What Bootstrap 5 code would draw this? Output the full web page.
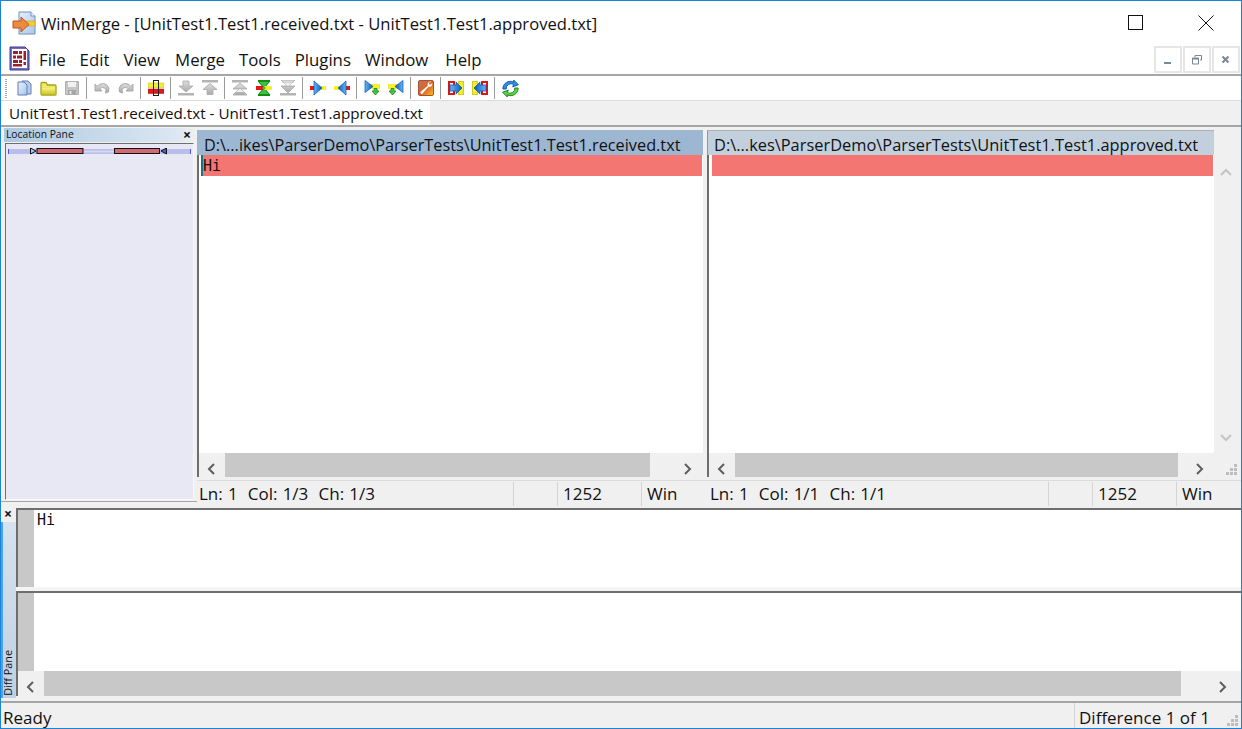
<!DOCTYPE html>
<html lang="en">
<head>
<meta charset="utf-8">
<title>WinMerge</title>
<link href="https://cdn.jsdelivr.net/npm/bootstrap@5.3.0/dist/css/bootstrap.min.css" rel="stylesheet">
<style>
html,body{margin:0;height:100%;overflow:hidden;background:#f0f0f0}
body{font-family:"Open Sans","Noto Sans",sans-serif;color:#111;line-height:1}
.wm-win{width:1242px;height:729px;border:1px solid #1883d7;background:#f0f0f0;overflow:hidden}
.wm-title{height:44px;background:#fff;flex:none;position:relative}
.wm-title-ico{margin-left:11px;margin-top:10px;flex:none}
.wm-title-txt{font-size:16.6px;margin-left:4px;margin-top:15px;white-space:nowrap}
.wm-caps{margin-left:auto;padding-right:27px;padding-top:14px;gap:54px}
.wm-menu{height:31px;background:#fff;border-bottom:2px solid #a6a6a6;flex:none}
.wm-menu-ico{margin-left:8px;margin-top:1px;flex:none}
.wm-menu-items{margin-left:9px;font-size:16.8px;margin-top:7px;gap:14px;white-space:nowrap}
.wm-merge{margin-left:1px}
.wm-help{margin-left:3px}
.wm-mdi{margin-left:auto;gap:1px;padding-right:1px;padding-top:1px}
.wm-mdi-b{width:28px;height:27px;border:2px solid #e6e6e6;background:#fff}
.wm-tools{height:25px;background:#fff;border-bottom:1px solid #dcdcdc;flex:none;padding-left:11px;position:relative}
.wm-grip{position:absolute;left:4px;top:3px;width:2px;height:19px;background:repeating-linear-gradient(#a9a9a9 0 1px,#fff 1px 2px)}
.wm-tb{width:24px;height:24px;flex:none}
.wm-sep{width:6px;height:24px;flex:none;position:relative}
.wm-sep::after{content:"";position:absolute;left:2px;top:1px;bottom:1px;width:1px;background:#9a9a9a}
.wm-tabs{height:26px;border-bottom:2px solid #a6a6a6;flex:none}
.wm-tab{width:429px;background:#fff;font-size:15.2px;padding-left:8px;padding-top:5px;white-space:nowrap;height:24px}
.wm-main{height:381px;flex:none}
.wm-left{width:196px;flex:none;height:375px;border-bottom:1px solid #a6a6a6;padding:1px 0 0 3px}
.wm-loc-h{height:14px;margin-bottom:1px;margin-right:1px;background:linear-gradient(90deg,#adc9e2,#dbe7f2 90%,#f0f0f0);font-size:10.3px;padding:1px 0 0 2px;position:relative;white-space:nowrap}
.wm-x{position:absolute;font-size:14px;font-weight:700;color:#111}
.wm-loc-x{right:5px;top:0}
.wm-loc{height:357px;width:189px;margin-left:1px;background:#e7e8f3;border-top:1px solid #6e6e6e;border-left:1px solid #6e6e6e;border-right:1px solid #f8f8f8;border-bottom:1px solid #f8f8f8;padding-top:4px;padding-left:2px}
.wm-right{width:1044px;flex:none;padding-top:3px}
.wm-panes{height:350px;flex:none}
.wm-pl{width:510px;flex:none}
.wm-pr{width:533px;flex:none}
.wm-head{height:25px;font-size:16.3px;padding:7px 0 0 7px;white-space:nowrap;flex:none}
.wm-head-a{background:#9db6d2;width:506px}
.wm-head-b{background:#c2d0de;width:507px;border-left:1px solid #8c98a4;border-top:1px solid #b0b0b0;padding-top:6px;padding-left:6px;font-size:16.4px}
.wm-body{height:298px;flex:none;background:#fff;border-left:2px solid #6e6e6e}
.wm-body-a{width:506px;margin-left:0;padding-left:3px}
.wm-body-b{width:507px;margin-left:0;padding-left:3px}
.wm-code{font-family:"DejaVu Sans Mono",monospace;font-size:15px}
.wm-diffline{height:21px;background:#f47672;padding:4px 0 0 1px;position:relative;margin-right:1px}
.wm-caret{position:absolute;left:-1px;top:0;bottom:0;width:2px;background:#14787c}
.wm-vs{width:25px;height:298px;flex:none;padding:11px 0 9px 6px}
.wm-hs{height:24px;margin-top:0;flex:none;border-left:2px solid #6e6e6e}
.wm-hs-btn{background:#f0f0f0;flex:none}
.wm-thumb{background:#c8c8c8;flex:none}
.wm-b26{width:26px;padding-left:7px;padding-top:6px}
.wm-r1{width:53px;padding-left:31px;padding-top:6px}
.wm-r2{width:60px;padding-left:15px;padding-top:6px}
.wm-t-a{width:425px}
.wm-t-b{width:443px}
.wm-corner{flex:1;position:relative}
.wm-szgrip{position:absolute;right:2px;bottom:1px;width:12px;height:12px}
.wm-stats{height:27px;border-top:1px solid #dcdcdc;font-size:17px;padding-top:1px;flex:none}
.wm-sl{width:510px}.wm-sr{width:533px}
.wm-st{height:24px;padding-top:3px;white-space:pre;word-spacing:.7px;border-left:1px solid #d4d4d4;padding-left:5px;flex:none}
.wm-st-1{border-left:0;padding-left:2px;width:316px}
.wm-st-1b{border-left:0;padding-left:3px;width:341px}
.wm-st-2{width:44px}.wm-st-3{width:84px}.wm-st-4{width:63px}
.wm-diff{height:190px;flex:none}
.wm-strip{width:15px;flex:none;position:relative;background:linear-gradient(#d7e4f0,#bfd1e3)}
.wm-strip::before{content:"";position:absolute;left:0;top:14px;bottom:0;width:2px;background:#4aa3ea}
.wm-strip-h{height:14px;background:#f0f0f0;position:relative;flex:none}
.wm-strip-x{left:3px;top:-1px}
.wm-dp{position:absolute;left:2px;bottom:2px;font-size:10.8px;writing-mode:vertical-rl;transform:rotate(180deg);white-space:nowrap}
.wm-ed{flex:1}
.wm-e1{height:79px;border-top:2px solid #6e6e6e;border-left:2px solid #6e6e6e;background:#fff;flex:none}
.wm-gut{width:16px;background:#c8c8c8;flex:none}
.wm-e1 .wm-code{padding:3px 0 0 3px}
.wm-gap{height:4px;flex:none;background:#f4f4f4}
.wm-e2{height:80px;border-top:2px solid #6e6e6e;border-left:2px solid #6e6e6e;background:#fff;flex:none}
.wm-hs2{height:25px;flex:none;border-left:2px solid #6e6e6e}
.wm-b27{width:26px;padding-left:7px;padding-top:6px}
.wm-t-c{width:1137px}
.wm-r3{width:57px;padding-left:35px;padding-top:6px}
.wm-status{height:27px;flex:none;border-top:2px solid #a6a6a6;margin-top:3px;font-size:17px;position:relative}
.wm-ready{padding:6px 0 0 2px;width:1073px;flex:none}
.wm-diffn{border-left:1px solid #d4d4d4;padding:6px 0 0 4px;height:25px;white-space:nowrap}
</style>
</head>
<body>
<svg width="0" height="0" class="d-block position-absolute">
<defs>
<linearGradient id="g-blue" x1="0" y1="0" x2="1" y2="1"><stop offset="0" stop-color="#e8f1fb"/><stop offset="1" stop-color="#a9c5ea"/></linearGradient>
<linearGradient id="g-yel" x1="0" y1="0" x2="0" y2="1"><stop offset="0" stop-color="#f6f37a"/><stop offset="1" stop-color="#cfc82c"/></linearGradient>
<linearGradient id="g-gray" x1="0" y1="0" x2="0" y2="1"><stop offset="0" stop-color="#dedede"/><stop offset="1" stop-color="#aaa"/></linearGradient>
<linearGradient id="g-wr" x1="0" y1="0" x2="1" y2="1"><stop offset="0" stop-color="#b8735e"/><stop offset=".55" stop-color="#e0632a"/><stop offset="1" stop-color="#f8c81c"/></linearGradient>
<linearGradient id="g-arrow" x1="0" y1="0" x2="1" y2="0"><stop offset="0" stop-color="#5dbbf5"/><stop offset="1" stop-color="#0d55c0"/></linearGradient>
<linearGradient id="g-arrowl" x1="1" y1="0" x2="0" y2="0"><stop offset="0" stop-color="#5dbbf5"/><stop offset="1" stop-color="#0d55c0"/></linearGradient>
<symbol id="i-down" viewBox="0 0 16 16"><path d="M5 1h6v5h4l-7 6-7-6h4z" fill="url(#g-gray)" stroke="#a8a8a8" stroke-width=".8"/><rect x="0" y="13" width="16" height="2.5" fill="#b4b4b4"/></symbol>
<symbol id="i-up" viewBox="0 0 16 16"><rect x="0" y="0" width="16" height="2.5" fill="#b4b4b4"/><path d="M8 3.500l7 6h-4v5H5v-5H1z" fill="url(#g-gray)" stroke="#a8a8a8" stroke-width=".8"/></symbol>
<symbol id="i-first" viewBox="0 0 16 16"><rect x="0" y="0" width="16" height="2.5" fill="#b4b4b4"/><path d="M8 3l7 6H1zM8 8l7 7H1z" fill="url(#g-gray)" stroke="#a8a8a8" stroke-width=".8"/><path d="M8 8.500l4 3.500H4z" fill="#efefef"/></symbol>
<symbol id="i-last" viewBox="0 0 16 16"><rect x="0" y="13" width="16" height="2.5" fill="#b4b4b4"/><path d="M1 0h14L8 7zM1 6h14L8 13z" fill="url(#g-gray)" stroke="#a8a8a8" stroke-width=".8"/><path d="M4 3h8L8 6.500z" fill="#efefef"/></symbol>
</defs>
</svg>
<div class="wm-win d-flex flex-column">
  <div class="wm-title d-flex">
    <svg class="wm-title-ico" width="25" height="25" viewBox="0 0 25 25"><path d="M7 1h12l4 4v18H7z" fill="url(#g-blue)" stroke="#6d92b8"/><path d="M19 1v4h4" fill="#fff" stroke="#6d92b8"/><rect x="11" y="10" width="12" height="5" fill="#f4cc3a" stroke="#b99722" stroke-width=".5"/><path d="M9 6v4H1v7h8v4l8-7.500z" fill="#ee8a3a" stroke="#b4562a"/></svg>
    <div class="wm-title-txt">WinMerge - [UnitTest1.Test1.received.txt - UnitTest1.Test1.approved.txt]</div>
    <div class="wm-caps d-flex">
      <svg width="16" height="16" viewBox="0 0 16 16"><rect x=".5" y=".5" width="14" height="14" fill="none" stroke="#111"/></svg>
      <svg width="16" height="16" viewBox="0 0 16 16"><path d="M.5.5l15 15M15.500.5l-15 15" stroke="#111" fill="none"/></svg>
    </div>
  </div>
  <div class="wm-menu d-flex">
    <svg class="wm-menu-ico" width="21" height="25" viewBox="0 0 21 25"><path d="M1 1h15l4 4v19H1z" fill="#6f6fc8" stroke="#3a3a90"/><rect x="3" y="3" width="15" height="19" fill="#fff"/><g fill="#9c1f2c"><rect x="4" y="5" width="5" height="3"/><rect x="10" y="5" width="3" height="3"/><rect x="4" y="9.500" width="3" height="3"/><rect x="8" y="9.500" width="5" height="3"/><rect x="4" y="14" width="5" height="3"/><rect x="10" y="14" width="3" height="3"/><rect x="4" y="18" width="9" height="2.500"/><rect x="14.500" y="5" width="2.500" height="9"/><rect x="14.500" y="16" width="2.500" height="3"/></g></svg>
    <div class="wm-menu-items d-flex"><span>File</span><span>Edit</span><span>View</span><span class="wm-merge">Merge</span><span>Tools</span><span>Plugins</span><span>Window</span><span class="wm-help">Help</span></div>
    <div class="wm-mdi d-flex">
      <div class="wm-mdi-b d-flex align-items-center justify-content-center"><svg width="10" height="10" viewBox="0 0 10 10"><rect x="1" y="7" width="7" height="2" fill="#7b8796"/></svg></div>
      <div class="wm-mdi-b d-flex align-items-center justify-content-center"><svg width="10" height="10" viewBox="0 0 10 10"><path d="M3 2V.5h6.500V5H8M.5 3h6v6h-6z" fill="none" stroke="#7b8796"/><rect x=".5" y="3" width="6" height="1.500" fill="#7b8796"/></svg></div>
      <div class="wm-mdi-b d-flex align-items-center justify-content-center"><svg width="10" height="10" viewBox="0 0 10 10"><path d="M1.500 1.500l6 6M7.500 1.500l-6 6" stroke="#7b8796" stroke-width="2"/></svg></div>
    </div>
  </div>
  <div class="wm-tools d-flex align-items-center">
    <div class="wm-grip"></div>
    <div class="wm-tb d-flex align-items-center justify-content-center"><svg width="16" height="16" viewBox="0 0 16 16"><path d="M6 1h6l3 3v10h-5z" fill="#b8cdea" stroke="#5d7fb5"/><path d="M2 2h6l3 3v10H2z" fill="url(#g-blue)" stroke="#5d7fb5"/></svg></div>
    <div class="wm-tb d-flex align-items-center justify-content-center"><svg width="17" height="16" viewBox="0 0 17 16"><path d="M1 3.500V14q0 1 1 1h13q1 0 1-1V6q0-1-1-1H7.500L6 2.500H2q-1 0-1 1z" fill="#ecea6a" stroke="#a8a218" stroke-width="1.300"/><path d="M2 8h13v6H2z" fill="url(#g-yel)"/></svg></div>
    <div class="wm-tb d-flex align-items-center justify-content-center"><svg width="16" height="16" viewBox="0 0 16 16"><path d="M1.500 1.500h13v13h-13z" fill="#c4c4c4" stroke="#b0b0b0"/><rect x="4" y="2" width="8" height="5" fill="#f2f2f2"/><rect x="4" y="10" width="8" height="4.500" fill="#a6a6a6"/><rect x="5.500" y="11" width="2" height="3" fill="#e4e4e4"/></svg></div>
    <div class="wm-sep"></div>
    <div class="wm-tb d-flex align-items-center justify-content-center"><svg width="16" height="16" viewBox="0 0 16 16"><path d="M1 4v7h7L5.500 8.500Q9 6 12 9l-.5 4 3-1Q16 8 13 5T5 4.500L3 6.500z" fill="url(#g-gray)" stroke="#a0a0a0" stroke-width=".8"/></svg></div>
    <div class="wm-tb d-flex align-items-center justify-content-center"><svg width="16" height="16" viewBox="0 0 16 16"><path d="M15 4v7H8l2.500-2.500Q7 6 4 9l.5 4-3-1Q0 8 3 5t8-.5l2 2z" fill="url(#g-gray)" stroke="#a0a0a0" stroke-width=".8"/></svg></div>
    <div class="wm-sep"></div>
    <div class="wm-tb d-flex align-items-center justify-content-center"><svg width="16" height="16" viewBox="0 0 16 16"><rect x="0" y="3" width="16" height="4.500" fill="#f3ef2c" stroke="#c2bd1c" stroke-width=".5"/><rect x="0" y="9" width="16" height="4.500" fill="#e01818" stroke="#a81010" stroke-width=".5"/><rect x="5.500" y=".5" width="5" height="15" fill="none" stroke="#222"/></svg></div>
    <div class="wm-sep"></div>
    <div class="wm-tb d-flex align-items-center justify-content-center"><svg width="16" height="16"><use href="#i-down"/></svg></div>
    <div class="wm-tb d-flex align-items-center justify-content-center"><svg width="16" height="16"><use href="#i-up"/></svg></div>
    <div class="wm-sep"></div>
    <div class="wm-tb d-flex align-items-center justify-content-center"><svg width="16" height="16"><use href="#i-first"/></svg></div>
    <div class="wm-tb d-flex align-items-center justify-content-center"><svg width="16" height="16" viewBox="0 0 16 16"><path d="M2 1h12L8 8zM2 15h12L8 8z" fill="#3cc23c" stroke="#0f7a0f"/><rect x="0" y="6" width="8" height="4" fill="#e01818"/><rect x="8" y="6" width="8" height="4" fill="#f3ef2c"/><path d="M6 8h4L8 6z M6 8h4L8 10z" fill="#3cc23c"/><rect x="2" y="0" width="12" height="1.500" fill="#0f8a0f"/><rect x="2" y="14.500" width="12" height="1.500" fill="#0f8a0f"/></svg></div>
    <div class="wm-tb d-flex align-items-center justify-content-center"><svg width="16" height="16"><use href="#i-last"/></svg></div>
    <div class="wm-sep"></div>
    <div class="wm-tb d-flex align-items-center justify-content-center"><svg width="16" height="16" viewBox="0 0 16 16"><rect x="0" y="6" width="5" height="4" fill="#e01818"/><rect x="11" y="6" width="5" height="4" fill="#f3ef2c"/><path d="M4 1l8 7-8 7z" fill="url(#g-arrow)" stroke="#0d4fa8" stroke-width=".7"/></svg></div>
    <div class="wm-tb d-flex align-items-center justify-content-center"><svg width="16" height="16" viewBox="0 0 16 16"><rect x="11" y="6" width="5" height="4" fill="#e01818"/><rect x="0" y="6" width="5" height="4" fill="#f3ef2c"/><path d="M12 1L4 8l8 7z" fill="url(#g-arrowl)" stroke="#0d4fa8" stroke-width=".7"/></svg></div>
    <div class="wm-sep"></div>
    <div class="wm-tb d-flex align-items-center justify-content-center"><svg width="16" height="16" viewBox="0 0 16 16"><rect x="6" y="4" width="10" height="5" fill="#f3ef2c"/><path d="M1 .5l8 6-8 6z" fill="url(#g-arrow)" stroke="#0d4fa8" stroke-width=".7"/><path d="M10 8.500h3v2.500h2l-3.500 4L8 11h2z" fill="#44c544" stroke="#0f7a0f" stroke-width=".7"/></svg></div>
    <div class="wm-tb d-flex align-items-center justify-content-center"><svg width="16" height="16" viewBox="0 0 16 16"><rect x="0" y="4" width="10" height="5" fill="#f3ef2c"/><path d="M15 .5l-8 6 8 6z" fill="url(#g-arrowl)" stroke="#0d4fa8" stroke-width=".7"/><path d="M3 8.500h3v2.500h2l-3.500 4L1 11h2z" fill="#44c544" stroke="#0f7a0f" stroke-width=".7"/></svg></div>
    <div class="wm-sep"></div>
    <div class="wm-tb d-flex align-items-center justify-content-center"><svg width="16" height="16" viewBox="0 0 16 16"><rect x=".5" y=".5" width="15" height="15" rx="1.500" fill="url(#g-wr)" stroke="#a85030"/><path d="M13.500 1.800a3 3 0 0 0-3.800 3.900L2.500 11.900a1.500 1.500 0 0 0 1.900 1.900l6.200-7a3 3 0 0 0 3.600-3.700l-1.700 1.500-1.500-.4-.3-1.400z" fill="#fff"/></svg></div>
    <div class="wm-sep"></div>
    <div class="wm-tb d-flex align-items-center justify-content-center"><svg width="16" height="16" viewBox="0 0 16 16"><rect x="1" y="2" width="5" height="12" fill="#fff" stroke="#d81818" stroke-width="2"/><rect x="10.500" y="1.500" width="5" height="13" fill="#f3ef2c" stroke="#cfca1c"/><path d="M2 5h6V2l6 6-6 6v-3H2z" fill="url(#g-arrow)" stroke="#0d4fa8" stroke-width=".7"/></svg></div>
    <div class="wm-tb d-flex align-items-center justify-content-center"><svg width="16" height="16" viewBox="0 0 16 16"><rect x="10" y="2" width="5" height="12" fill="#fff" stroke="#d81818" stroke-width="2"/><rect x=".5" y="1.500" width="5" height="13" fill="#f3ef2c" stroke="#cfca1c"/><path d="M14 5H8V2L2 8l6 6v-3h6z" fill="url(#g-arrowl)" stroke="#0d4fa8" stroke-width=".7"/></svg></div>
    <div class="wm-sep"></div>
    <div class="wm-tb d-flex align-items-center justify-content-center"><svg width="17" height="17" viewBox="0 0 16 16"><path d="M.8 8.500A7 7 0 0 1 11 2V0l4.500 4.500L10 6.500l1-2.200A4.500 4.500 0 0 0 4 8.500z" fill="#2f8fe0" stroke="#0d4fa8" stroke-width=".8"/><path d="M15.200 7.500A7 7 0 0 1 5 14v2L.5 11.500 6 9.500l-1 2.200A4.500 4.500 0 0 0 12 7.500z" fill="#5ed04a" stroke="#0f7a0f" stroke-width=".8"/></svg></div>
  </div>
  <div class="wm-tabs"><div class="wm-tab">UnitTest1.Test1.received.txt - UnitTest1.Test1.approved.txt</div></div>
  <div class="wm-main d-flex">
    <div class="wm-left">
      <div class="wm-loc-h">Location Pane<span class="wm-x wm-loc-x">×</span></div>
      <div class="wm-loc">
        <svg class="d-block" width="184" height="7" viewBox="0 0 184 7"><rect x="0" y="1" width="183" height="5" fill="#b9bdeb"/><rect x="0" y="1" width="1" height="5" fill="#5555cc"/><rect x="182" y="1" width="1" height="5" fill="#5555cc"/><rect x="75" y="2.500" width="31" height="2" fill="#d4d8f4"/><rect x="29" y=".5" width="46" height="5" fill="#d26a74" stroke="#111"/><rect x="106.500" y=".5" width="45" height="5" fill="#d26a74" stroke="#111"/><path d="M22.500 0v6l5.500-3z" fill="#b9bdeb" stroke="#111"/><path d="M158.500 0v6l-5.500-3z" fill="#5a5ad8" stroke="#111"/></svg>
      </div>
    </div>
    <div class="wm-right d-flex flex-column">
      <div class="wm-panes d-flex">
        <div class="wm-pl d-flex flex-column">
          <div class="wm-head wm-head-a">D:\...ikes\ParserDemo\ParserTests\UnitTest1.Test1.received.txt</div>
          <div class="wm-body wm-body-a"><div class="wm-diffline wm-code"><span class="wm-caret"></span>Hi</div></div>
          <div class="wm-hs d-flex"><div class="wm-hs-btn wm-b26"><svg width="12" height="12" viewBox="0 0 12 12"><path d="M8 1L3 6l5 5" fill="none" stroke="#5e5e5e" stroke-width="2"/></svg></div><div class="wm-thumb wm-t-a"></div><div class="wm-hs-btn wm-r1"><svg width="12" height="12" viewBox="0 0 12 12"><path d="M4 1l5 5-5 5" fill="none" stroke="#5e5e5e" stroke-width="2"/></svg></div></div>
        </div>
        <div class="wm-pr d-flex flex-column">
          <div class="wm-head wm-head-b">D:\...kes\ParserDemo\ParserTests\UnitTest1.Test1.approved.txt</div>
          <div class="d-flex">
            <div class="wm-body wm-body-b"><div class="wm-diffline wm-code"></div></div>
            <div class="wm-vs d-flex flex-column justify-content-between"><svg width="12" height="12" viewBox="0 0 12 12"><path d="M1 9l5-5 5 5" fill="none" stroke="#c4c4c4" stroke-width="2"/></svg><svg width="12" height="12" viewBox="0 0 12 12"><path d="M1 3l5 5 5-5" fill="none" stroke="#c4c4c4" stroke-width="2"/></svg></div>
          </div>
          <div class="wm-hs d-flex"><div class="wm-hs-btn wm-b26"><svg width="12" height="12" viewBox="0 0 12 12"><path d="M8 1L3 6l5 5" fill="none" stroke="#5e5e5e" stroke-width="2"/></svg></div><div class="wm-thumb wm-t-b"></div><div class="wm-hs-btn wm-r2"><svg width="12" height="12" viewBox="0 0 12 12"><path d="M4 1l5 5-5 5" fill="none" stroke="#5e5e5e" stroke-width="2"/></svg></div>
            <div class="wm-corner"><svg class="wm-szgrip" viewBox="0 0 12 12"><g fill="#bdbdbd"><rect x="8" y="0" width="3" height="3"/><rect x="4" y="4" width="3" height="3"/><rect x="8" y="4" width="3" height="3"/><rect x="0" y="8" width="3" height="3"/><rect x="4" y="8" width="3" height="3"/><rect x="8" y="8" width="3" height="3"/></g></svg></div>
          </div>
        </div>
      </div>
      <div class="wm-stats d-flex">
        <div class="wm-sl d-flex"><div class="wm-st wm-st-1">Ln: 1  Col: 1/3  Ch: 1/3</div><div class="wm-st wm-st-2"></div><div class="wm-st wm-st-3">1252</div><div class="wm-st wm-st-4">Win</div></div>
        <div class="wm-sr d-flex"><div class="wm-st wm-st-1b">Ln: 1  Col: 1/1  Ch: 1/1</div><div class="wm-st wm-st-2"></div><div class="wm-st wm-st-3">1252</div><div class="wm-st wm-st-4">Win</div></div>
      </div>
    </div>
  </div>
  <div class="wm-diff d-flex">
    <div class="wm-strip d-flex flex-column">
      <div class="wm-strip-h"><span class="wm-x wm-strip-x">×</span></div>
      <div class="wm-dp">Diff Pane</div>
    </div>
    <div class="wm-ed d-flex flex-column">
      <div class="wm-e1 d-flex"><div class="wm-gut"></div><div class="wm-code">Hi</div></div>
      <div class="wm-gap"></div>
      <div class="wm-e2 d-flex"><div class="wm-gut"></div></div>
      <div class="wm-hs2 d-flex"><div class="wm-hs-btn wm-b27"><svg width="12" height="12" viewBox="0 0 12 12"><path d="M8 1L3 6l5 5" fill="none" stroke="#5e5e5e" stroke-width="2"/></svg></div><div class="wm-thumb wm-t-c"></div><div class="wm-hs-btn wm-r3"><svg width="12" height="12" viewBox="0 0 12 12"><path d="M4 1l5 5-5 5" fill="none" stroke="#5e5e5e" stroke-width="2"/></svg></div></div>
    </div>
  </div>
  <div class="wm-status d-flex">
    <div class="wm-ready">Ready</div>
    <div class="wm-diffn">Difference 1 of 1</div>
    <svg class="wm-szgrip" viewBox="0 0 12 12"><g fill="#bdbdbd"><rect x="8" y="0" width="3" height="3"/><rect x="4" y="4" width="3" height="3"/><rect x="8" y="4" width="3" height="3"/><rect x="0" y="8" width="3" height="3"/><rect x="4" y="8" width="3" height="3"/><rect x="8" y="8" width="3" height="3"/></g></svg>
  </div>
</div>
<script src="https://cdn.jsdelivr.net/npm/bootstrap@5.3.0/dist/js/bootstrap.bundle.min.js"></script>
</body>
</html>
